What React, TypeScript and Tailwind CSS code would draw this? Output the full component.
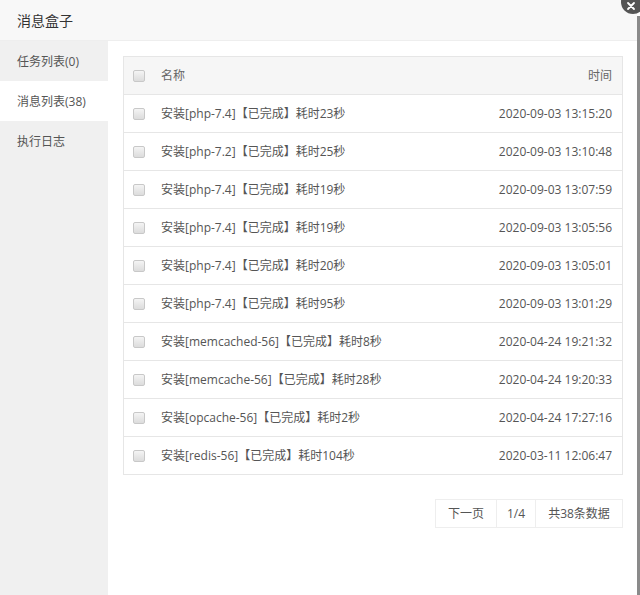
const rows = [
  { name: '安装[php-7.4]【已完成】耗时23秒', time: '2020-09-03 13:15:20' },
  { name: '安装[php-7.2]【已完成】耗时25秒', time: '2020-09-03 13:10:48' },
  { name: '安装[php-7.4]【已完成】耗时19秒', time: '2020-09-03 13:07:59' },
  { name: '安装[php-7.4]【已完成】耗时19秒', time: '2020-09-03 13:05:56' },
  { name: '安装[php-7.4]【已完成】耗时20秒', time: '2020-09-03 13:05:01' },
  { name: '安装[php-7.4]【已完成】耗时95秒', time: '2020-09-03 13:01:29' },
  { name: '安装[memcached-56]【已完成】耗时8秒', time: '2020-04-24 19:21:32' },
  { name: '安装[memcache-56]【已完成】耗时28秒', time: '2020-04-24 19:20:33' },
  { name: '安装[opcache-56]【已完成】耗时2秒', time: '2020-04-24 17:27:16' },
  { name: '安装[redis-56]【已完成】耗时104秒', time: '2020-03-11 12:06:47' },
];

const tabs = [
  { label: '任务列表(0)', active: false },
  { label: '消息列表(38)', active: true },
  { label: '执行日志', active: false },
];

function Checkbox() {
  return (
    <span className="block h-[12px] w-[12px] rounded-[2px] border border-[#c8c8c8] bg-gradient-to-b from-[#f4f4f4] to-[#dcdcdc]" />
  );
}

export default function App() {
  return (
    <div
      className="relative flex h-[595px] w-[640px] overflow-hidden bg-white text-[#555]"
      style={{ fontFamily: '"Open Sans", "Noto Sans CJK SC", sans-serif' }}
    >
      <div className="flex w-[637px] flex-col">
        {/* title bar */}
        <div className="flex h-[41px] items-center border-b border-[#eee] bg-[#f8f8f8] pl-[17px] text-[14px] text-[#333]">
          消息盒子
        </div>

        <div className="flex flex-1">
          {/* side tabs */}
          <div className="w-[108px] bg-[#f0f0f0]">
            {tabs.map((t) => (
              <div
                key={t.label}
                className={`flex h-[40px] items-center pl-[17px] pt-[1px] text-[12px] text-[#555] ${t.active ? 'bg-white' : ''}`}
              >
                {t.label}
              </div>
            ))}
          </div>

          {/* content */}
          <div className="flex-1 pl-[15px] pr-[14px] pt-[15px]">
            <div className="border border-[#e6e6e6]">
              <div className="flex h-[37px] items-center bg-[#f6f6f6] pl-[9px] pr-[10px] text-[12px] text-[#666]">
                <Checkbox />
                <span className="ml-[16px]">名称</span>
                <span className="ml-auto">时间</span>
              </div>
              {rows.map((r, i) => (
                <div
                  key={i}
                  className="flex h-[38px] items-center border-t border-[#e6e6e6] pl-[9px] pr-[10px] text-[12px] text-[#555]"
                >
                  <Checkbox />
                  <span className="ml-[16px]">{r.name}</span>
                  <span className="ml-auto">{r.time}</span>
                </div>
              ))}
            </div>

            <div className="mt-[24px] flex justify-end">
              <div className="flex h-[29px] border border-[#eee] text-[12px] text-[#555]">
                <span className="flex w-[60px] items-center justify-center">下一页</span>
                <span className="flex w-[39px] items-center justify-center border-l border-[#eee]">1/4</span>
                <span className="flex w-[87px] items-center justify-center border-l border-[#eee]">共38条数据</span>
              </div>
            </div>
          </div>
        </div>
      </div>

      {/* backdrop strip */}
      <div className="mt-[16px] w-[3px] bg-[#8a8a8a]" />

      {/* close button */}
      <div className="absolute right-[-5px] top-[-10px] flex h-[24px] w-[24px] items-center justify-center rounded-full bg-[#555]">
        <svg width="10" height="10" viewBox="0 0 10 10" className="mt-[7px] mr-[5px]">
          <path d="M2 2L8 8M8 2L2 8" stroke="white" strokeWidth="1.8" strokeLinecap="round" />
        </svg>
      </div>
    </div>
  );
}
